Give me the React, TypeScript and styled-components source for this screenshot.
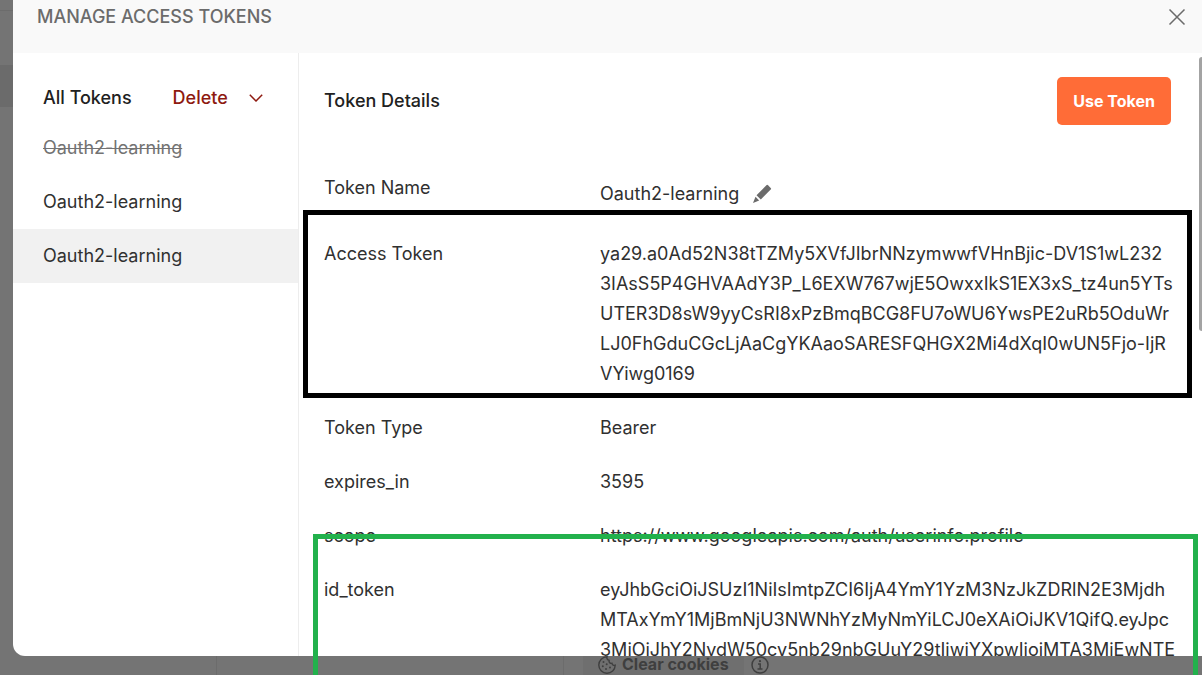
import React from "react";
import styled, { createGlobalStyle, css } from "styled-components";

const GlobalStyle = createGlobalStyle`
  *, *::before, *::after { box-sizing: border-box; }
  body {
    margin: 0;
    background: #747474;
    color: #303030;
    font: 400 18px/30px Inter, "Liberation Sans", sans-serif;
  }
  button { font: inherit; border: 0; padding: 0; background: none; cursor: pointer; }
`;

const Screen = styled.div`
  position: relative;
  display: flex;
  flex-direction: column;
  height: 100vh;
  overflow: hidden;
`;

const Stage = styled.div`
  display: flex;
  flex: 1;
  min-height: 0;
`;

const BackdropEdge = styled.div`
  width: 13px;
  flex: none;
  padding-top: 10px;

  &::before {
    content: "";
    display: block;
    height: 55px;
    border-top: 1px solid #6c6c6c;
  }
  &::after {
    content: "";
    display: block;
    height: 42px;
    background: #6b6b6b;
  }
`;

const Dialog = styled.section`
  flex: 1;
  min-width: 0;
  display: flex;
  flex-direction: column;
  overflow: hidden;
  background: #fff;
  border-bottom-left-radius: 12px;
`;

const DialogHeader = styled.header`
  display: flex;
  justify-content: space-between;
  align-items: flex-start;
  flex: none;
  height: 53px;
  padding: 2px 16px 0 24px;
  background: #f9f9f9;
`;

const DialogTitle = styled.h1`
  margin: 0;
  font-size: 18px;
  font-weight: 500;
  color: #6b6b6b;
`;

const IconButton = styled.button`
  display: flex;
  align-items: center;
  height: 30px;
  color: #6b6b6b;
`;

const DialogBody = styled.div`
  display: flex;
  flex: 1;
  min-height: 0;
`;

const Sidebar = styled.aside`
  flex: none;
  width: 286px;
  border-right: 1px solid #ededed;
`;

const SidebarHeader = styled.div`
  display: flex;
  align-items: center;
  gap: 41px;
  padding: 30px 30px 8px;
`;

const Heading = styled.h2`
  margin: 0;
  color: #212121;
  font-size: 18px;
  font-weight: 500;
`;

const DeleteButton = styled.button`
  display: flex;
  align-items: center;
  gap: 21px;
  color: #8e1a10;
  font-weight: 500;
`;

const TokenList = styled.ul`
  margin: 0;
  padding: 0;
  list-style: none;
`;

const TokenItem = styled.button<{ $selected?: boolean; $expired?: boolean }>`
  display: block;
  width: 100%;
  padding: 12px 30px;
  text-align: left;
  color: #303030;
  ${(p) => p.$selected && css`background: #f1f1f1;`}
  ${(p) => p.$expired && css`color: #737373; text-decoration: line-through 1px;`}
`;

const Details = styled.main`
  flex: 1;
  min-width: 0;
  display: flex;
  overflow: hidden;
`;

const DetailsContent = styled.div`
  flex: 1;
  min-width: 0;
  padding: 24px 28px 0 25px;
`;

const DetailsHeader = styled.div`
  display: flex;
  justify-content: space-between;
  align-items: center;
  margin-bottom: 36px;
`;

const PrimaryButton = styled.button`
  height: 48px;
  padding: 0 16px;
  border-radius: 5px;
  background: #ff6c37;
  color: #fff;
  font-size: 16px;
  font-weight: 700;
`;

const Fields = styled.dl`
  margin: 0;
`;

const Field = styled.div<{ $framed?: boolean }>`
  position: relative;
  display: grid;
  grid-template-columns: 276px 1fr;
  padding: 12px 0;
  ${(p) =>
    p.$framed &&
    css`
      &::after {
        content: "";
        position: absolute;
        inset: -17px -21px 3px;
        border: 5px solid #000;
        pointer-events: none;
      }
    `}
`;

const Label = styled.dt``;

const Value = styled.dd<{ $editable?: boolean }>`
  margin: 0;
  min-width: 0;
  white-space: nowrap;
  ${(p) =>
    p.$editable &&
    css`
      display: flex;
      gap: 13px;
      padding: 6px 0;
    `}
`;

const Line = styled.span`
  display: block;
`;

const ScrollTrack = styled.div`
  flex: none;
  width: 3px;
  padding-top: 4px;
`;

const ScrollThumb = styled.div`
  height: 274px;
  border-radius: 4px 0 0 4px;
  background: #a3a3a3;
`;

const GreenFrame = styled.div`
  position: absolute;
  top: 534px;
  right: 4px;
  bottom: 0;
  left: 313px;
  border: 5px solid #22b14c;
  border-bottom: 0;
  pointer-events: none;
`;

const PageFooter = styled.footer`
  display: flex;
  flex: none;
  height: 19px;
`;

const FooterPane = styled.div<{ $width: number }>`
  flex: none;
  width: ${(p) => p.$width}px;
  border-right: 1px solid #6c6c6c;
`;

const FooterTools = styled.div`
  display: flex;
  align-items: flex-start;
  padding-left: 19px;
`;

const CookieButton = styled.button`
  display: flex;
  align-items: center;
  gap: 6px;
  height: 19px;
  padding: 0 15px 2px;
  background: #6f6f6f;
  color: #3f3f3f;
  font-size: 16px;
  line-height: 17px;
  font-weight: 700;
`;

const InfoButton = styled(IconButton)`
  height: 17px;
  margin-left: 7px;
  color: #3f3f3f;
`;

const CloseIcon = () => (
  <svg width="18" height="18" viewBox="0 0 18 18" fill="none" stroke="currentColor" strokeWidth="1.5">
    <path d="M1.5 1.5l15 15M16.5 1.5l-15 15" />
  </svg>
);

const ChevronIcon = () => (
  <svg width="14" height="8" viewBox="0 0 14 8" fill="none" stroke="currentColor" strokeWidth="1.5">
    <path d="M.8.8L7 7 13.2.8" />
  </svg>
);

const PencilIcon = () => (
  <svg width="20" height="20" viewBox="0 0 20 20" fill="currentColor">
    <path d="M14.4 1.3a1.2 1.2 0 0 1 1.7 0l2.6 2.6a1.2 1.2 0 0 1 0 1.7L8.8 15.5 4.5 11.2z" />
    <path d="M3.5 12.8l3.7 3.7L1 18.9z" />
  </svg>
);

const CookieIcon = () => (
  <svg width="18" height="18" viewBox="0 0 18 18" fill="none" stroke="currentColor" strokeWidth="1.4">
    <path d="M9 .8a8.2 8.2 0 1 0 8.2 8.4c-1.5.5-3-.3-3.2-1.9-2 .3-3.3-1-2.9-2.9C9.4 4.2 8.5 2.5 9 .8z" />
    <g fill="currentColor" stroke="none">
      <circle cx="5.5" cy="6" r="1" />
      <circle cx="8.7" cy="8.3" r="1" />
      <circle cx="4.8" cy="10.2" r="1" />
      <circle cx="8" cy="13" r="1" />
      <circle cx="12" cy="11.5" r="1" />
    </g>
  </svg>
);

const InfoIcon = () => (
  <svg width="18" height="18" viewBox="0 0 18 18" fill="none" stroke="currentColor" strokeWidth="1.5">
    <circle cx="9" cy="9" r="8" />
    <path d="M7 8h2.2v5M6.5 13h5" />
    <circle cx="9" cy="5.2" r="1.1" fill="currentColor" stroke="none" />
  </svg>
);

const tokens = [
  { id: 1, name: "Oauth2-learning", expired: true },
  { id: 2, name: "Oauth2-learning" },
  { id: 3, name: "Oauth2-learning", selected: true },
];

const fields = [
  {
    label: "Access Token",
    framed: true,
    lines: [
      "ya29.a0Ad52N38tTZMy5XVfJIbrNNzymwwfVHnBjic-DV1S1wL232",
      "3IAsS5P4GHVAAdY3P_L6EXW767wjE5OwxxIkS1EX3xS_tz4un5YTs",
      "UTER3D8sW9yyCsRI8xPzBmqBCG8FU7oWU6YwsPE2uRb5OduWr",
      "LJ0FhGduCGcLjAaCgYKAaoSARESFQHGX2Mi4dXqI0wUN5Fjo-IjR",
      "VYiwg0169",
    ],
  },
  { label: "Token Type", lines: ["Bearer"] },
  { label: "expires_in", lines: ["3595"] },
  { label: "scope", lines: ["https://www.googleapis.com/auth/userinfo.profile"] },
  {
    label: "id_token",
    lines: [
      "eyJhbGciOiJSUzI1NiIsImtpZCI6IjA4YmY1YzM3NzJkZDRlN2E3Mjdh",
      "MTAxYmY1MjBmNjU3NWNhYzMyNmYiLCJ0eXAiOiJKV1QifQ.eyJpc",
      "3MiOiJhY2NvdW50cy5nb29nbGUuY29tIiwiYXpwIjoiMTA3MjEwNTE",
    ],
  },
];

export default function App() {
  return (
    <Screen>
      <GlobalStyle />
      <Stage>
        <BackdropEdge />
        <Dialog role="dialog" aria-labelledby="dialog-title">
          <DialogHeader>
            <DialogTitle id="dialog-title">MANAGE ACCESS TOKENS</DialogTitle>
            <IconButton aria-label="Close">
              <CloseIcon />
            </IconButton>
          </DialogHeader>
          <DialogBody>
            <Sidebar>
              <SidebarHeader>
                <Heading>All Tokens</Heading>
                <DeleteButton>
                  Delete
                  <ChevronIcon />
                </DeleteButton>
              </SidebarHeader>
              <TokenList>
                {tokens.map((t) => (
                  <li key={t.id}>
                    <TokenItem $selected={t.selected} $expired={t.expired}>
                      {t.name}
                    </TokenItem>
                  </li>
                ))}
              </TokenList>
            </Sidebar>
            <Details>
              <DetailsContent>
                <DetailsHeader>
                  <Heading>Token Details</Heading>
                  <PrimaryButton>Use Token</PrimaryButton>
                </DetailsHeader>
                <Fields>
                  <Field>
                    <Label>Token Name</Label>
                    <Value $editable>
                      Oauth2-learning
                      <IconButton aria-label="Edit token name">
                        <PencilIcon />
                      </IconButton>
                    </Value>
                  </Field>
                  {fields.map((f) => (
                    <Field key={f.label} $framed={f.framed}>
                      <Label>{f.label}</Label>
                      <Value>
                        {f.lines.map((line) => (
                          <Line key={line}>{line}</Line>
                        ))}
                      </Value>
                    </Field>
                  ))}
                </Fields>
              </DetailsContent>
              <ScrollTrack>
                <ScrollThumb />
              </ScrollTrack>
            </Details>
          </DialogBody>
        </Dialog>
      </Stage>
      <PageFooter>
        <FooterPane $width={217} />
        <FooterPane $width={347} />
        <FooterTools>
          <CookieButton>
            <CookieIcon />
            Clear cookies
          </CookieButton>
          <InfoButton aria-label="Cookie information">
            <InfoIcon />
          </InfoButton>
        </FooterTools>
      </PageFooter>
      <GreenFrame />
    </Screen>
  );
}
